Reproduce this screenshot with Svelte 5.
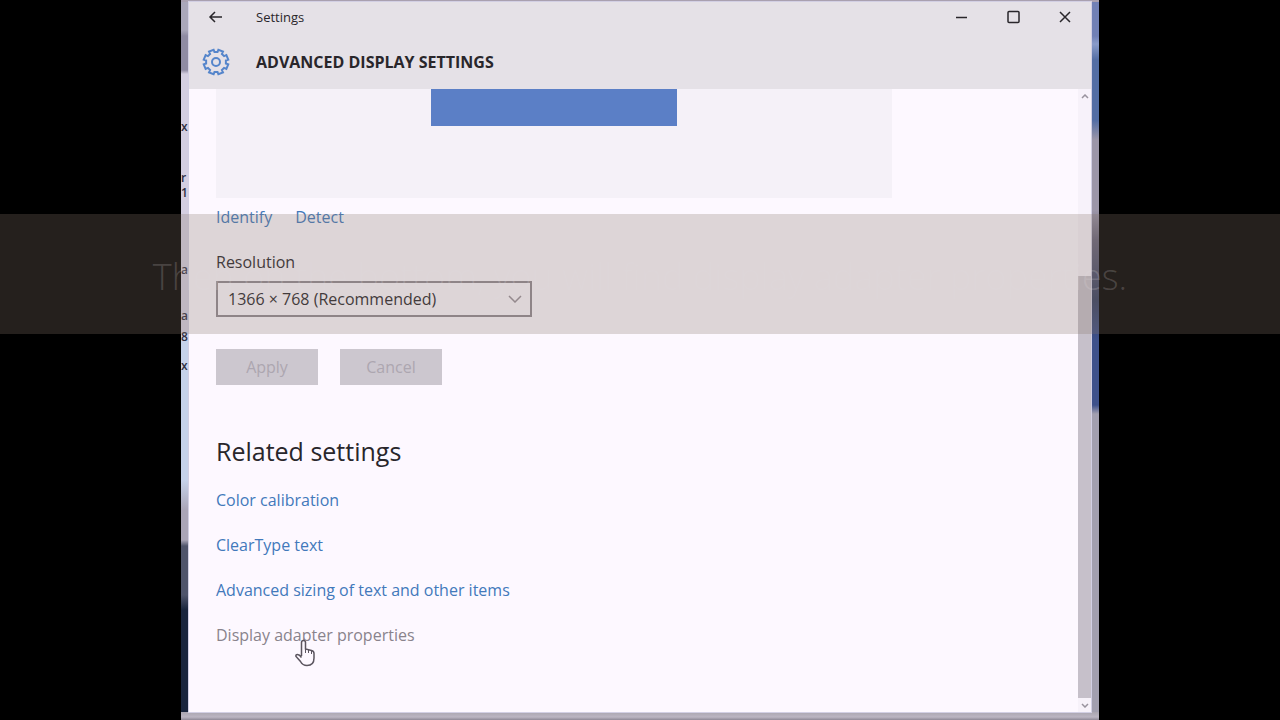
<script lang="ts">
  let resolution = $state('1366');

  const relatedLinks = ['Color calibration', 'ClearType text', 'Advanced sizing of text and other items'];

  // bits of the window underneath that peek out on the left edge
  const peeks = [
    { text: 'x', top: 121 },
    { text: 'r', top: 172 },
    { text: '1', top: 187 },
    { text: 'a', top: 264 },
    { text: 'a', top: 310 },
    { text: '8', top: 331 },
    { text: 'x', top: 360 }
  ];

  // eight-toothed gear outline around 0,0
  function gearPath() {
    const pts: string[] = [];
    for (let i = 0; i < 8; i++) {
      const mid = ((i + 0.5) * Math.PI) / 4;
      for (const [r, a] of [[10, -0.24], [12.5, -0.2], [12.5, 0.2], [10, 0.24]]) {
        pts.push(`${(r * Math.cos(mid + a)).toFixed(2)} ${(r * Math.sin(mid + a)).toFixed(2)}`);
      }
    }
    return 'M' + pts.join('L') + 'Z';
  }
</script>

<div class="stage">
  <div class="desktop">
    {#each peeks as peek}
      <span class="peek" style="top: {peek.top}px" aria-hidden="true">{peek.text}</span>
    {/each}

    <div class="window">
      <header>
        <div class="titlebar">
          <button type="button" class="back" aria-label="Back">
            <svg width="16" height="14" viewBox="0 0 16 14"><path d="M15 7H3M8 2L3 7l5 5" /></svg>
          </button>
          <span class="app-name">Settings</span>
          <button type="button" class="caption-btn" aria-label="Minimize">
            <svg width="14" height="14" viewBox="0 0 14 14"><path d="M2 7.5h11" /></svg>
          </button>
          <button type="button" class="caption-btn" aria-label="Maximize">
            <svg width="14" height="14" viewBox="0 0 14 14"><rect x="2" y="1.5" width="11" height="11" rx="1" /></svg>
          </button>
          <button type="button" class="caption-btn" aria-label="Close">
            <svg width="14" height="14" viewBox="0 0 14 14"><path d="M2 2l10 10M12 2L2 12" /></svg>
          </button>
        </div>
        <div class="page-title">
          <svg class="gear" width="28" height="28" viewBox="-14 -14 28 28">
            <path d={gearPath()} />
            <circle r="4" />
          </svg>
          <h1>Advanced display settings</h1>
        </div>
      </header>

      <div class="body">
        <main>
          <div class="preview"><div class="monitor"></div></div>

          <div class="actions">
            <a href="#identify">Identify</a>
            <a href="#detect">Detect</a>
          </div>

          <label for="resolution">Resolution</label>
          <div class="select">
            <select id="resolution" bind:value={resolution}>
              <option value="1366">1366 × 768 (Recommended)</option>
              <option value="1280">1280 × 720</option>
              <option value="1024">1024 × 768</option>
            </select>
            <svg width="14" height="8" viewBox="0 0 14 8"><path d="M1 1l6 6 6-6" /></svg>
          </div>

          <div class="buttons">
            <button type="button" disabled>Apply</button>
            <button type="button" disabled>Cancel</button>
          </div>

          <h2>Related settings</h2>
          <nav>
            {#each relatedLinks as link}
              <a href="#related">{link}</a>
            {/each}
            <a href="#adapter" class="hovered">
              Display adapter properties
              <svg class="pointer" width="20" height="28" viewBox="0 0 20 28">
                <path d="M6.5 17V3.5a2 2 0 0 1 4 0V10l6 1.5q2.5.7 2.5 3V19q0 7.5-7 7.5-4.5 0-6.5-4L1 17.5q-.5-2 1.5-2 2 0 4 3" />
                <path class="thin" d="M10.5 10v4M13.5 11v3M16.5 12v3" />
              </svg>
            </a>
          </nav>
        </main>

        <div class="scrollbar">
          <button type="button" aria-label="Scroll up">
            <svg width="8" height="5" viewBox="0 0 8 5"><path d="M1 4l3-3 3 3" /></svg>
          </button>
          <div class="track"><div class="thumb"></div></div>
          <button type="button" aria-label="Scroll down">
            <svg width="8" height="5" viewBox="0 0 8 5"><path d="M1 1l3 3 3-3" /></svg>
          </button>
        </div>
      </div>
    </div>
  </div>

  <div class="subtitle">Then on the bottom, you will find display adapter properties.</div>
</div>

<style>
  :global(body) {
    margin: 0;
    background: #000;
  }

  .stage {
    position: relative;
    box-sizing: border-box;
    min-height: 100vh;
    padding: 0 181px;
    display: flex;
    background: #000;
    color: #29262b;
    font-family: 'Open Sans', 'Noto Sans', sans-serif;
    font-size: 16px;
    line-height: 22px;
  }

  /* strips of the desktop visible on both sides of the window */
  .desktop {
    position: relative;
    flex: 1;
    display: flex;
    box-sizing: border-box;
    padding: 2px 8px 8px;
    overflow: hidden;
    background:
      linear-gradient(#a9a0b0, #a9a0b0) top / 100% 2px no-repeat,
      linear-gradient(#aaa5b0, #bbb5c2 5px, #8e8896) bottom / 100% 8px no-repeat,
      linear-gradient(#aaa7ba 0 30px, #8f8ba3 36px 70px, #d4cfe1 74px 330px, #c6d2ea 340px 480px, #aaa5b7 510px 540px, #4f546b 546px 595px, #18243c 610px) left / 8px 100% no-repeat,
      linear-gradient(#7180b5 0 36px, #899bca 44px, #536da4 60px 120px, #9c96a8 140px 210px, #68647a 240px, #353f60 300px, #3e518b 340px 405px, #a29faf 414px) right / 8px 100% no-repeat;
  }

  .peek {
    position: absolute;
    left: 0;
    color: #302f42;
    font-size: 12px;
    font-weight: 600;
    line-height: 12px;
  }

  .window {
    position: relative;
    flex: 1;
    min-width: 0;
    display: flex;
    flex-direction: column;
    background: #fdf8ff;
    outline: 1px solid #d2cfe4;
  }

  button {
    border: 0;
    padding: 0;
    background: none;
    color: inherit;
    font: inherit;
  }

  svg {
    fill: none;
    stroke: currentColor;
    stroke-width: 1.5;
  }

  header {
    height: 87px;
    background: #e5e1e7;
  }

  .titlebar {
    display: flex;
    align-items: center;
    height: 30px;
  }

  .titlebar button {
    display: grid;
    place-items: center;
    width: 52px;
    height: 30px;
  }

  .app-name {
    flex: 1;
    padding-left: 15px;
    font-size: 13px;
  }

  .page-title {
    display: flex;
    align-items: center;
    gap: 26px;
    height: 60px;
    padding-left: 13px;
  }

  .gear {
    color: #5585cb;
    stroke-width: 2;
  }

  h1 {
    margin: 0;
    font-size: 16px;
    font-weight: 700;
    text-transform: uppercase;
  }

  .body {
    flex: 1;
    display: flex;
  }

  main {
    flex: 1;
    padding: 0 27px;
  }

  .preview {
    display: flex;
    justify-content: center;
    max-width: 676px;
    height: 109px;
    background: #f5f1f8;
  }

  .monitor {
    width: 246px;
    height: 37px;
    background: #5b7fc6;
  }

  a {
    color: #4279bb;
    text-decoration: none;
  }

  .actions {
    display: flex;
    gap: 23px;
    margin-top: 8px;
  }

  label {
    display: block;
    width: fit-content;
    margin: 23px 0 8px;
  }

  .select {
    display: grid;
    align-items: center;
    max-width: 316px;
  }

  .select select,
  .select svg {
    grid-area: 1 / 1;
  }

  .select svg {
    justify-self: end;
    margin-right: 10px;
    color: #99919a;
    pointer-events: none;
  }

  select {
    appearance: none;
    width: 100%;
    height: 36px;
    padding: 0 36px 0 10px;
    border: 2px solid #918a92;
    border-radius: 0;
    background: transparent;
    color: inherit;
    font: inherit;
  }

  .buttons {
    display: flex;
    gap: 22px;
    margin-top: 32px;
  }

  .buttons button {
    width: 102px;
    height: 36px;
    background: #ccc7cf;
    color: #aca6b0;
  }

  h2 {
    margin: 48px 0 20px;
    font-size: 25px;
    font-weight: 400;
    line-height: 36px;
  }

  nav {
    display: flex;
    flex-direction: column;
    align-items: flex-start;
    gap: 23px;
  }

  .hovered {
    position: relative;
    color: #89838c;
  }

  .pointer {
    position: absolute;
    left: 79px;
    top: 15px;
    color: #5b555f;
    fill: #fdf8ff;
  }

  .thin {
    stroke-width: 1;
  }

  .scrollbar {
    display: flex;
    flex-direction: column;
    width: 13px;
    background: #f7f2fa;
  }

  .scrollbar button {
    display: grid;
    place-items: center;
    height: 14px;
    color: #99939e;
  }

  .track {
    flex: 1;
    display: flex;
    flex-direction: column;
    justify-content: flex-end;
  }

  .thumb {
    height: 71%;
    background: #c6c0ca;
  }

  /* video caption fading in over the whole frame */
  .subtitle {
    position: absolute;
    left: 0;
    right: 0;
    top: 214px;
    height: 120px;
    background: rgba(138, 120, 108, 0.27);
    color: rgba(226, 219, 223, 0.2);
    font-size: 36px;
    font-weight: 300;
    line-height: 126px;
    text-align: center;
    white-space: nowrap;
    pointer-events: none;
  }
</style>
